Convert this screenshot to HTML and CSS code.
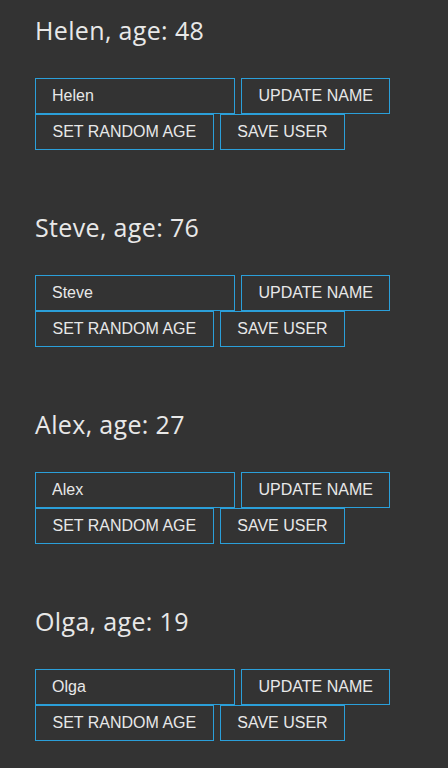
FILE: index.html
```html
<!DOCTYPE html>
<html lang="en">
<head>
  <meta charset="UTF-8" />
  <title>Users</title>
  <link rel="stylesheet" href="styles.css">
</head>
<body>
  <div class="users">
    <div class="user">
      <h2 class="user-title">Helen, age: 48</h2>
      <div class="user-row">
        <input class="user-input" type="text" value="Helen">
        <button class="btn">UPDATE NAME</button>
      </div>
      <div class="user-row">
        <button class="btn">SET RANDOM AGE</button>
        <button class="btn">SAVE USER</button>
      </div>
    </div>

    <div class="user">
      <h2 class="user-title">Steve, age: 76</h2>
      <div class="user-row">
        <input class="user-input" type="text" value="Steve">
        <button class="btn">UPDATE NAME</button>
      </div>
      <div class="user-row">
        <button class="btn">SET RANDOM AGE</button>
        <button class="btn">SAVE USER</button>
      </div>
    </div>

    <div class="user">
      <h2 class="user-title">Alex, age: 27</h2>
      <div class="user-row">
        <input class="user-input" type="text" value="Alex">
        <button class="btn">UPDATE NAME</button>
      </div>
      <div class="user-row">
        <button class="btn">SET RANDOM AGE</button>
        <button class="btn">SAVE USER</button>
      </div>
    </div>

    <div class="user">
      <h2 class="user-title">Olga, age: 19</h2>
      <div class="user-row">
        <input class="user-input" type="text" value="Olga">
        <button class="btn">UPDATE NAME</button>
      </div>
      <div class="user-row">
        <button class="btn">SET RANDOM AGE</button>
        <button class="btn">SAVE USER</button>
      </div>
    </div>
  </div>
</body>
</html>
```

FILE: styles.css
```css
* {
  margin: 0;
  padding: 0;
  box-sizing: border-box;
}

:root {
  --bg: #333333;
  --text: #e8e8e8;
  --accent: #2b9fd9;
}

body {
  background: var(--bg);
  color: var(--text);
  font-family: 'Liberation Sans', Arial, sans-serif;
}

.users {
  padding-left: 35px;
}

.user {
  padding: 13px 0 47px;
}

.user-title {
  font-family: 'Open Sans', sans-serif;
  font-weight: 400;
  font-size: 25px;
  line-height: 34px;
  letter-spacing: 0.35px;
  color: var(--text);
  margin-bottom: 31px;
}

.user-row {
  display: flex;
  gap: 6px;
}

.user-input,
.btn {
  height: 36px;
  border: 1px solid var(--accent);
  background: transparent;
  color: var(--text);
  font-family: 'Liberation Sans', Arial, sans-serif;
  font-size: 16px;
  padding: 0 16px;
  outline: none;
}

.user-input {
  width: 200px;
}

.btn {
  padding: 0 16.5px;
  cursor: pointer;
}
```
